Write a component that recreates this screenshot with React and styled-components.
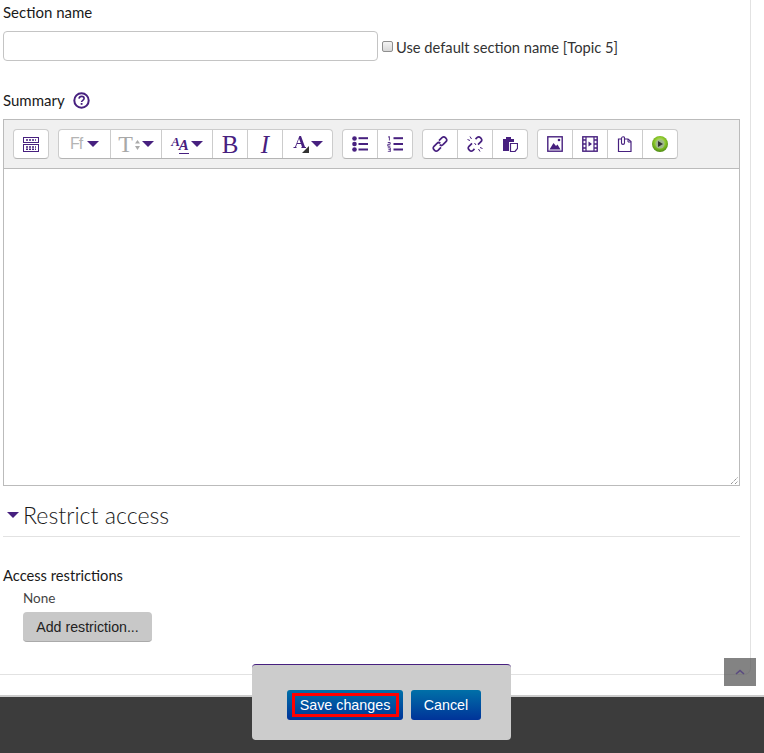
import React from 'react'
import styled, { createGlobalStyle } from 'styled-components'

const purple = '#47207f'

const Global = createGlobalStyle`
  html, body {
    margin: 0;
    padding: 0;
    background: #fff;
    font-family: "Lato", "Open Sans", sans-serif;
    color: #1a1a1a;
  }
`
const Page = styled.div`
  position: relative;
  width: 764px;
  height: 753px;
  overflow: hidden;
  background: #fff;
`
const Main = styled.div`
  box-sizing: border-box;
  width: 751px;
  height: 675px;
  padding: 2px 10px 0 3px;
  border-right: 1px solid #e2e2e2;
  border-bottom: 1px solid #e2e2e2;
  border-bottom-right-radius: 7px;
`
const Label = styled.div`
  display: flex;
  align-items: center;
  gap: 8px;
  height: 20px;
  font-size: ${p => p.$size || 15}px;
  color: #1a1a1a;
`
const NameRow = styled.div`
  display: flex;
  align-items: center;
  margin: 9px 0 29px;
`
const NameInput = styled.input`
  box-sizing: border-box;
  width: 375px;
  height: 30px;
  border: 1px solid #c4c4c4;
  border-radius: 4px;
  background: #fff;
`
const Check = styled.span`
  box-sizing: border-box;
  width: 11px;
  height: 11px;
  margin: 0 3px 0 4px;
  border: 1px solid #8f8f8f;
  border-radius: 2px;
  background: linear-gradient(#f4f4f4, #d8d8d8);
`
const CheckText = styled.span`
  padding-top: 2px;
  font-size: 14.7px;
  color: #333;
  white-space: nowrap;
`
const Editor = styled.div`
  box-sizing: border-box;
  width: 737px;
  height: 367px;
  margin-top: 9px;
  display: flex;
  flex-direction: column;
  border: 1px solid #bbb;
`
const Toolbar = styled.div`
  display: flex;
  gap: 9px;
  height: 49px;
  flex: none;
  box-sizing: border-box;
  padding: 9px 9px 0;
  background: #f0f0f0;
  border-bottom: 1px solid #bbb;
`
const Group = styled.div`
  display: flex;
  height: 30px;
  box-sizing: border-box;
  background: #fff;
  border: 1px solid #ccc;
  border-bottom-color: #b4b4b4;
  border-radius: 4px;
`
const Tool = styled.div`
  box-sizing: border-box;
  width: ${p => p.$w || 35}px;
  flex: none;
  display: flex;
  align-items: center;
  justify-content: center;
  gap: 2px;
  border-left: 1px solid #ccc;
  &:first-child {
    width: ${p => (p.$w || 35) - 1}px;
    border-left: 0;
  }
  &:last-child {
    width: ${p => (p.$w || 35) - 1}px;
  }
`
const Caret = styled.i`
  display: block;
  width: 0;
  height: 0;
  border-left: 6.5px solid transparent;
  border-right: 6.5px solid transparent;
  border-top: 6px solid ${purple};
`
const SerifGlyph = styled.span`
  font-family: "Liberation Serif", serif;
  font-size: ${p => p.$size || 25}px;
  line-height: 1;
  color: ${p => (p.$muted ? '#a8a8a8' : purple)};
  font-style: ${p => (p.$italic ? 'italic' : 'normal')};
`
const FontName = styled.span`
  font-family: "Liberation Sans", sans-serif;
  font-size: 16px;
  letter-spacing: -1px;
  margin-right: 3px;
  color: #b4b4b4;
`
const Stacked = styled.span`
  display: flex;
  align-items: flex-end;
  font-family: "Liberation Serif", serif;
  font-style: italic;
  font-weight: bold;
  color: ${purple};
  line-height: 1;
`
const SmallA = styled.span`
  font-size: 13px;
  margin-bottom: 6px;
  margin-right: -1px;
`
const BigA = styled.span`
  font-size: 15px;
  border-bottom: 1px solid ${purple};
`
const TextArea = styled.div`
  position: relative;
  flex: 1;
  background: #fff;
`
const Grip = styled.svg`
  position: absolute;
  right: 0;
  bottom: 0;
`
const Section = styled.h3`
  box-sizing: border-box;
  display: flex;
  align-items: center;
  gap: 4px;
  width: 737px;
  height: 51px;
  margin: 0;
  padding: 8px 0 0 4px;
  border-bottom: 1px solid #e2e2e2;
  font-size: 23.2px;
  font-weight: 300;
  color: #1a1a1a;
`
const AccessBlock = styled.div`
  margin-top: 28px;
`
const Indented = styled.div`
  padding-left: 20px;
`
const NoneText = styled.div`
  font-size: 13.5px;
  line-height: 16px;
  margin-top: 5px;
  color: #444;
`
const GreyButton = styled.button`
  display: block;
  width: 129px;
  height: 30px;
  margin-top: 6px;
  border: 0;
  border-bottom: 1px solid #aaa;
  border-radius: 4px;
  background: #c8c8c8;
  font-family: "Liberation Sans", sans-serif;
  font-size: 14.2px;
  color: #222;
`
const Footer = styled.div`
  height: 58px;
  margin-top: 20px;
  box-sizing: border-box;
  border-top: 2px solid #ccc;
  background: #3c3c3c;
`
const StickyBar = styled.div`
  position: absolute;
  left: 252px;
  top: 664px;
  box-sizing: border-box;
  width: 259px;
  height: 76px;
  padding: 25px 0 0 35px;
  display: flex;
  gap: 8px;
  align-items: flex-start;
  background: #ccc;
  border-top: 1px solid ${purple};
  border-radius: 4px;
`
const BlueButton = styled.button`
  box-sizing: border-box;
  display: flex;
  align-items: center;
  justify-content: center;
  width: ${p => p.$w}px;
  height: 30px;
  padding: 0;
  border: 0;
  border-radius: 3px;
  background: linear-gradient(#0070a8, #003399);
  font-family: "Liberation Sans", sans-serif;
  font-size: 14.3px;
  color: #fff;
`
const Focused = styled.span`
  box-sizing: border-box;
  width: 107px;
  height: 24px;
  line-height: 18px;
  border: 3px solid #f00;
  text-align: center;
`
const ToTop = styled.div`
  position: absolute;
  left: 724px;
  top: 658px;
  width: 32px;
  height: 28px;
  display: flex;
  align-items: center;
  justify-content: center;
  background: rgba(90, 90, 90, 0.75);
`

const Ico = ({ children, w = 16, h = 16 }) => (
  <svg width={w} height={h} viewBox={`0 0 ${w} ${h}`} fill="none" stroke={purple} strokeWidth="1">
    {children}
  </svg>
)

const App = () => {
  return (
    <Page>
      <Global />
      <Main>
        <Label>Section name</Label>
        <NameRow>
          <NameInput />
          <Check />
          <CheckText>Use default section name [Topic 5]</CheckText>
        </NameRow>
        <Label>
          Summary
          <svg width="17" height="17" viewBox="0 0 17 17">
            <circle cx="8.5" cy="8.5" r="7.2" fill="none" stroke={purple} strokeWidth="2" />
            <path d="M6 6.6c.2-1.500 1.200-2.200 2.600-2.200s2.500.8 2.500 2c0 1.900-2.500 1.900-2.500 3.600" fill="none" stroke={purple} strokeWidth="1.6" />
            <rect x="7.7" y="11" width="1.8" height="1.8" fill={purple} />
          </svg>
        </Label>
        <Editor>
          <Toolbar>
            <Group>
              <Tool>
                <Ico>
                  <rect x=".5" y="1.5" width="15" height="5" />
                  <rect x=".5" y="8.5" width="15" height="7" />
                  <path d="M3 4h10M3 11h10M3 13.2h10" strokeWidth="1.4" strokeDasharray="2 1" />
                </Ico>
              </Tool>
            </Group>
            <Group>
              <Tool $w={52}><FontName>Ff</FontName><Caret /></Tool>
              <Tool $w={51}>
                <SerifGlyph $muted $size={24}>T</SerifGlyph>
                <svg width="5" height="13" viewBox="0 0 5 13" fill="#aaa"><path d="M2.5 2 5 5.5H0zM2.5 12 0 8h5z" /></svg>
                <Caret />
              </Tool>
              <Tool $w={51}>
                <Stacked><SmallA>A</SmallA><BigA>A</BigA></Stacked>
                <Caret />
              </Tool>
              <Tool><SerifGlyph>B</SerifGlyph></Tool>
              <Tool><SerifGlyph $italic>I</SerifGlyph></Tool>
              <Tool $w={51}>
                <svg width="16" height="18" viewBox="0 0 16 18">
                  <path d="M.5 13h3v-1H3l1-3h4l1 3h-.6v1H13v-1h-1L8 1H6.4L2 12H.5zM4.4 8 6 3.4 7.7 8z" fill={purple} />
                  <path d="M16 11v7H9z" fill="#333" />
                </svg>
                <Caret />
              </Tool>
            </Group>
            <Group>
              <Tool>
                <Ico>
                  <g fill={purple} stroke="none">
                    <circle cx="2.5" cy="2.5" r="2.3" /><circle cx="2.5" cy="8" r="2.3" /><circle cx="2.5" cy="13.5" r="2.3" />
                    <rect x="6.5" y="1.2" width="9.5" height="2" /><rect x="6.5" y="7" width="9.5" height="2" /><rect x="6.5" y="12.5" width="9.5" height="2" />
                  </g>
                </Ico>
              </Tool>
              <Tool $w={36}>
                <Ico>
                  <g fill={purple} stroke="none">
                    <rect x="6.5" y="1.2" width="9.5" height="2" /><rect x="6.5" y="7" width="9.5" height="2" /><rect x="6.5" y="12.5" width="9.5" height="2" />
                  </g>
                  <path d="M1 1.2 2.4.5v4M.8 6.5h2.4V8.3H.8v1.9h2.6M.8 11.8h2.5v4H.8M1.4 13.7h1.8" strokeWidth=".9" />
                </Ico>
              </Tool>
            </Group>
            <Group>
              <Tool>
                <Ico>
                  <g strokeWidth="1.7">
                    <path d="M7 4.6 10 1.7c1-.9 2.5-.9 3.4 0l.6.6c.9 1 .9 2.4 0 3.4l-3 3c-1 .9-2.4.9-3.3 0" />
                    <path d="M9 11.4 6 14.3c-1 .9-2.5.9-3.4 0l-.6-.6c-.9-1-.9-2.4 0-3.4l3-3c1-.9 2.4-.9 3.3 0" />
                  </g>
                </Ico>
              </Tool>
              <Tool>
                <Ico>
                  <g strokeWidth="1.7">
                    <path d="M8.5 3.2 10 1.7c1-.9 2.5-.9 3.4 0l.6.6c.9 1 .9 2.4 0 3.4l-3 3" />
                    <path d="M7.5 12.8 6 14.3c-1 .9-2.5.9-3.4 0l-.6-.6c-.9-1-.9-2.4 0-3.4l3-3" />
                  </g>
                  <path d="M3 .5l1.500 2.500M.5 3.500l2.500 1M13 15.500l-1.500-2.500M15.500 12.500l-2.500-1M7.500 7l1.500 2" />
                </Ico>
              </Tool>
              <Tool $w={36}>
                <Ico>
                  <path d="M1 3h3V1h5v2h3v3H7v9H1z" fill={purple} stroke="none" />
                  <path d="M8.5 7.5h7v5l-2.5 3H8.5z" fill="#fff" strokeWidth="1.2" />
                </Ico>
              </Tool>
            </Group>
            <Group>
              <Tool>
                <Ico>
                  <rect x=".8" y=".8" width="14.4" height="14.4" strokeWidth="1.4" />
                  <path d="M2.5 13.5 6.5 7l2.500 3 1.500-1.500 3 5z" fill={purple} stroke="none" />
                  <circle cx="12" cy="4" r="1.3" fill={purple} stroke="none" />
                </Ico>
              </Tool>
              <Tool>
                <Ico>
                  <rect x=".8" y=".8" width="14.4" height="14.4" strokeWidth="1.4" />
                  <path d="M4 1v14M12 1v14" strokeWidth="1.2" />
                  <path d="M1 4h3M1 8h3M1 12h3M12 4h3M12 8h3M12 12h3" strokeWidth="1.4" />
                  <path d="M6.5 5.500 10 8l-3.500 2.500z" fill={purple} stroke="none" />
                </Ico>
              </Tool>
              <Tool>
                <Ico>
                  <path d="M4 3H1.500v12.500h12.500V5.500L11 3H8" strokeWidth="1.2" />
                  <path d="M11 3v3h3" strokeWidth="1" />
                  <path d="M4.500 2.500v4.500c0 1.800 3 1.800 3 0V2c0-1.700-3-1.700-3 .5" strokeWidth="1.1" />
                </Ico>
              </Tool>
              <Tool $w={36}>
                <svg width="16" height="16" viewBox="0 0 16 16">
                  <defs>
                    <radialGradient id="play" cx=".5" cy=".4" r=".6">
                      <stop offset="0" stopColor="#d5eb9b" />
                      <stop offset=".6" stopColor="#86c425" />
                      <stop offset="1" stopColor="#4c8a12" />
                    </radialGradient>
                  </defs>
                  <circle cx="8" cy="8" r="8" fill="url(#play)" />
                  <circle cx="8" cy="8" r="4.5" fill="#9fb98a" />
                  <path d="M6 5l5 3-5 3z" fill="#333" />
                </svg>
              </Tool>
            </Group>
          </Toolbar>
          <TextArea>
            <Grip width="9" height="9" viewBox="0 0 9 9" stroke="#666" strokeWidth="1" strokeDasharray="1 1">
              <path d="M1 8 8 1M5 8 8 5" />
            </Grip>
          </TextArea>
        </Editor>
        <Section>
          <Caret />
          Restrict access
        </Section>
        <AccessBlock>
          <Label $size={14.7}>Access restrictions</Label>
          <Indented>
            <NoneText>None</NoneText>
            <GreyButton>Add restriction...</GreyButton>
          </Indented>
        </AccessBlock>
      </Main>
      <Footer />
      <StickyBar>
        <BlueButton $w={116}><Focused>Save changes</Focused></BlueButton>
        <BlueButton $w={70}>Cancel</BlueButton>
      </StickyBar>
      <ToTop>
        <svg width="10" height="6" viewBox="0 0 10 6" fill="none" stroke="#5a4a80" strokeWidth="1.6"><path d="M1 5l4-3.500L9 5" /></svg>
      </ToTop>
    </Page>
  )
}

export default App
